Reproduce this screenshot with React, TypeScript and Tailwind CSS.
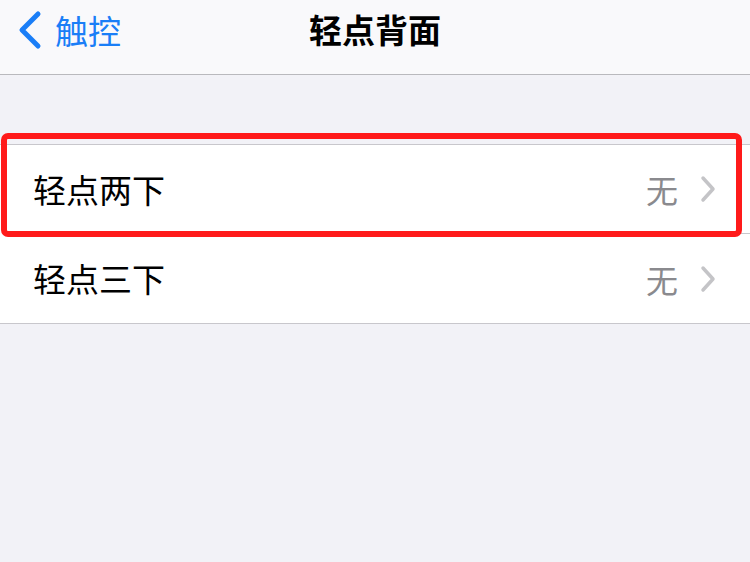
import React from "react";

const font = { fontFamily: '"Noto Sans CJK SC", "Noto Sans", sans-serif' };

interface RowProps {
  label: string;
  value: string;
  last?: boolean;
}

const Row: React.FC<RowProps> = ({ label, value, last }) => {
  return (
    <div className="flex h-[89px] items-center bg-white pl-[33px]">
      <div className={`flex h-full flex-1 items-center pr-[34px] ${last ? "" : "border-b border-[#c8c7cc]"}`}>
        <span className="flex-1 text-[33px] leading-none text-black">{label}</span>
        <span className="text-[32px] leading-none text-[#8a8a8e]">{value}</span>
        <svg width="16" height="28" viewBox="0 0 16 28" className="ml-[22px]">
          <path d="M3 3 L13 14 L3 25" fill="none" stroke="#c4c4c7" strokeWidth="3.5" strokeLinecap="round" strokeLinejoin="round" />
        </svg>
      </div>
    </div>
  );
};

export default function App() {
  return (
    <div className="h-[562px] w-[750px] overflow-hidden bg-[#f2f2f7]" style={font}>
      <div className="relative flex h-[75px] items-center justify-center border-b border-[#b9b9bd] bg-[#f9f9fb]">
        <div className="absolute left-[17px] top-0 flex h-[60px] items-center">
          <svg width="26" height="40" viewBox="0 0 26 40">
            <path d="M21 4 L5 20 L21 36" fill="none" stroke="#1a7ef7" strokeWidth="5" strokeLinecap="round" strokeLinejoin="round" />
          </svg>
          <span className="ml-[12px] text-[33px] leading-none text-[#1a7ef7]">触控</span>
        </div>
        <span className="-mt-[15px] text-[33px] font-bold leading-none text-black">轻点背面</span>
      </div>
      <div className="h-[69px]" />
      <div className="relative border-y border-[#c8c7cc]">
        <Row label="轻点两下" value="无" />
        <Row label="轻点三下" value="无" last />
        <div className="absolute left-[1px] top-[-12px] h-[104px] w-[741px] rounded-[7px] border-[6px] border-[#ff1a1a]" />
      </div>
    </div>
  );
}
